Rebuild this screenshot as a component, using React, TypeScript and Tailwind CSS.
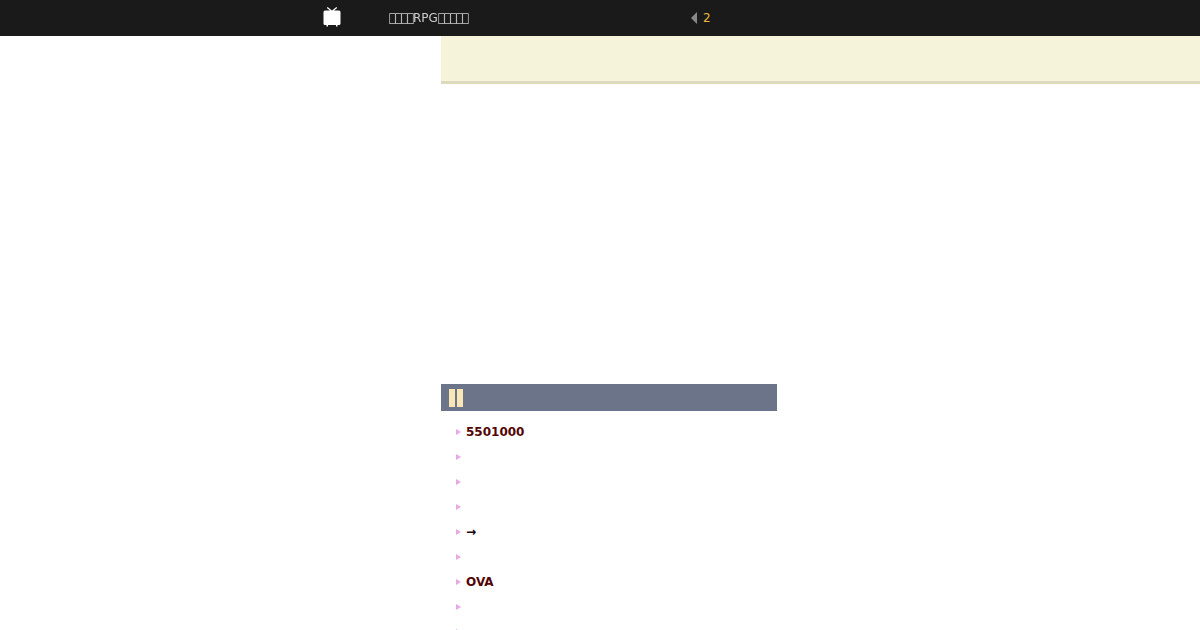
const items = ["5501000", "", "", "", "→", "", "OVA", "", ""];

const App = () => {
  return (
    <div className="h-[630px] overflow-hidden bg-white font-['DejaVu_Sans',sans-serif]">
      <header className="flex h-9 items-center bg-[#1a1a1a]">
        <div className="ml-[323px] flex w-[66px] shrink-0">
          <svg className="mb-[2px]" width="18" height="20" viewBox="0 0 18 20" fill="#fff">
            <path d="M4.6 0 L9 3.4 L13.4 0 L14.2 1 L11 3.5 H16 Q17.5 3.5 17.5 5 V16.5 Q17.5 18 16 18 H14.5 V19.5 H13 V18 H5 V19.5 H3.5 V18 H2 Q0.5 18 0.5 16.5 V5 Q0.5 3.5 2 3.5 H7 L3.8 1 Z" />
          </svg>
        </div>
        <div className="w-[302px] shrink-0 text-xs whitespace-nowrap text-[#cccccc] will-change-transform">
          <span className="tracking-[-1.2px]">{"\uE000\uE001\uE002\uE003"}</span>
          RPG
          <span className="tracking-[-1.2px]">{"\uE004\uE005\uE006\uE007\uE008"}</span>
        </div>
        <div className="h-0 w-0 border-y-[6px] border-r-[6px] border-y-transparent border-r-[#888888]" />
        <span className="ml-[6px] text-xs text-[#e8b93c]">2</span>
      </header>
      <div className="ml-[441px]">
        <div className="h-12 border-b-[3px] border-[#ddd9bd] bg-[#f5f4da]" />
        <div className="mt-[300px] w-[336px]">
          <div className="flex h-[27px] items-center gap-[2px] bg-[#6b7488] pl-2">
            <div className="h-[18px] w-[6px] bg-[#f9e6b6]" />
            <div className="h-[18px] w-[6px] bg-[#f9e6b6]" />
          </div>
          <ul className="mt-2 pl-[15px]">
            {items.map((item, i) => (
              <li key={i} className="flex h-[25px] items-center">
                <div className="h-0 w-0 border-y-[3.5px] border-l-[5px] border-y-transparent border-l-[#e8a8e4]" />
                <span className={item === "→" ? "ml-[5px] text-xs font-bold text-[#1a0505]" : "ml-[5px] text-xs font-bold text-[#520505]"}>
                  {item}
                </span>
              </li>
            ))}
          </ul>
        </div>
      </div>
    </div>
  );
};

export default App;
